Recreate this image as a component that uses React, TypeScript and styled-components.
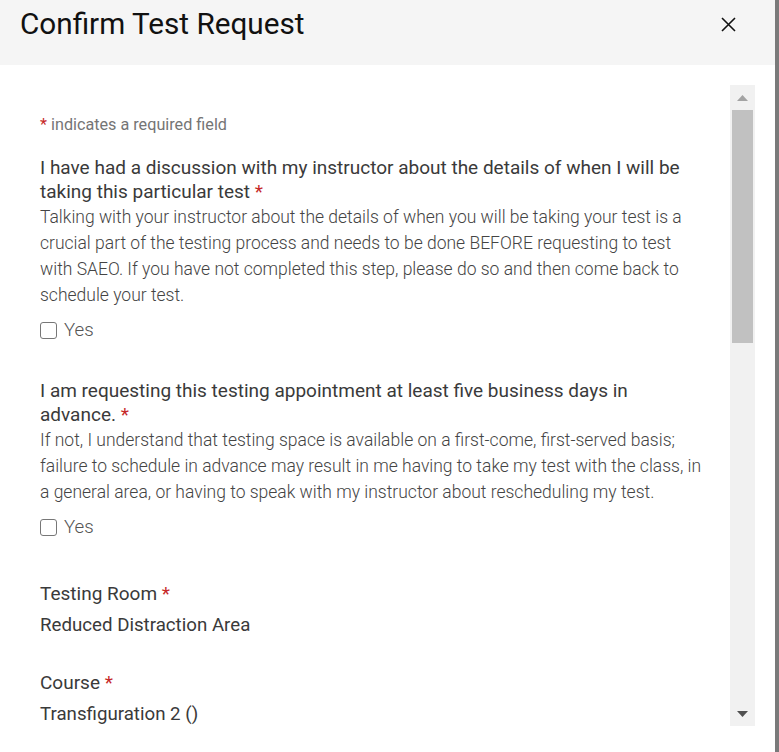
import React from "react"
import styled, { createGlobalStyle } from "styled-components"

const GlobalStyle = createGlobalStyle`
  html, body {
    margin: 0;
    padding: 0;
    background: #ffffff;
    font-family: Roboto, "Liberation Sans", Arial, sans-serif;
  }
`

const Page = styled.div`
  display: flex;
  width: 779px;
  height: 752px;
  overflow: hidden;
`

const Modal = styled.div`
  width: 775px;
  display: flex;
  flex-direction: column;
  background: #ffffff;
`

const Backdrop = styled.div`
  flex: 1;
  background: #7a7a7a;
`

const Header = styled.div`
  height: 65px;
  box-sizing: border-box;
  background: #f5f5f5;
  display: flex;
  justify-content: space-between;
  align-items: flex-start;
  padding: 5px 39px 0 20px;
`

const Title = styled.h2`
  margin: 0;
  font-size: 29.7px;
  line-height: 38px;
  font-weight: 400;
  color: #111;
`

const CloseButton = styled.button`
  border: none;
  background: none;
  padding: 0;
  margin-top: 11px;
  width: 16px;
  height: 16px;
  cursor: pointer;
  display: flex;
  align-items: center;
  justify-content: center;
`

const Body = styled.div`
  flex: 1;
  padding: 20px 20px 26px 20px;
  display: flex;
  min-height: 0;
`

const ScrollArea = styled.div`
  flex: 1;
  display: flex;
  min-height: 0;
`

const Content = styled.div`
  flex: 1;
  overflow: hidden;
  padding: 29px 24px 0 20px;
`

const Scrollbar = styled.div`
  width: 25px;
  background: #f1f1f1;
  display: flex;
  flex-direction: column;
  align-items: center;
`

const ArrowButton = styled.div<{ $down?: boolean }>`
  height: 25px;
  width: 100%;
  display: flex;
  align-items: center;
  justify-content: center;
  color: ${(p) => (p.$down ? "#505050" : "#a3a3a3")};
`

const Track = styled.div`
  flex: 1;
  width: 100%;
  padding: 0 2px;
  box-sizing: border-box;
`

const Thumb = styled.div`
  height: 233px;
  background: #c1c1c1;
`

const Note = styled.div`
  font-size: 16.2px;
  line-height: 22px;
  color: #757575;
  margin-bottom: 20px;
`

const Req = styled.span`
  color: #c62828;
`

const Field = styled.div<{ $gap?: number }>`
  margin-bottom: ${(p) => p.$gap ?? 37}px;
`

const Label = styled.div`
  font-size: 19px;
  line-height: 24px;
  color: #3a3a3a;
`

const Description = styled.div`
  font-size: 17.5px;
  line-height: 26px;
  font-weight: 300;
  color: #444;
`

const CheckRow = styled.label`
  display: flex;
  align-items: center;
  gap: 7px;
  height: 24px;
  margin-top: 10px;
  font-size: 18.7px;
  font-weight: 300;
  color: #555;
`

const Box = styled.input`
  appearance: none;
  margin: 0;
  width: 17px;
  height: 17px;
  border: 1.5px solid #777;
  border-radius: 3px;
  background: #fff;
  box-sizing: border-box;
`

const Value = styled.div`
  font-size: 18.7px;
  line-height: 24px;
  color: #3a3a3a;
  margin-top: 7px;
`

const checks = [
  {
    label: "I have had a discussion with my instructor about the details of when I will be taking this particular test",
    text: "Talking with your instructor about the details of when you will be taking your test is a crucial part of the testing process and needs to be done BEFORE requesting to test with SAEO. If you have not completed this step, please do so and then come back to schedule your test.",
  },
  {
    label: "I am requesting this testing appointment at least five business days in advance.",
    text: "If not, I understand that testing space is available on a first-come, first-served basis; failure to schedule in advance may result in me having to take my test with the class, in a general area, or having to speak with my instructor about rescheduling my test.",
  },
]

export default function App() {
  return (
    <Page>
      <GlobalStyle />
      <Modal>
        <Header>
          <Title>Confirm Test Request</Title>
          <CloseButton aria-label="Close">
            <svg width="15" height="15" viewBox="0 0 15 15">
              <path d="M1 1 L14 14 M14 1 L1 14" stroke="#111" strokeWidth="1.6" />
            </svg>
          </CloseButton>
        </Header>
        <Body>
          <ScrollArea>
            <Content>
              <Note>
                <Req>*</Req> indicates a required field
              </Note>
              {checks.map((c, i) => (
                <Field key={i} $gap={i === 0 ? 37 : 43}>
                  <Label>
                    {c.label} <Req>*</Req>
                  </Label>
                  <Description>{c.text}</Description>
                  <CheckRow>
                    <Box type="checkbox" />
                    Yes
                  </CheckRow>
                </Field>
              ))}
              <Field $gap={34}>
                <Label>
                  Testing Room <Req>*</Req>
                </Label>
                <Value>Reduced Distraction Area</Value>
              </Field>
              <Field>
                <Label>
                  Course <Req>*</Req>
                </Label>
                <Value>Transfiguration 2 ()</Value>
              </Field>
            </Content>
            <Scrollbar>
              <ArrowButton>
                <svg width="11" height="6" viewBox="0 0 11 6">
                  <path d="M0 6 L5.5 0 L11 6 Z" fill="currentColor" />
                </svg>
              </ArrowButton>
              <Track>
                <Thumb />
              </Track>
              <ArrowButton $down>
                <svg width="11" height="6" viewBox="0 0 11 6">
                  <path d="M0 0 L11 0 L5.5 6 Z" fill="currentColor" />
                </svg>
              </ArrowButton>
            </Scrollbar>
          </ScrollArea>
        </Body>
      </Modal>
      <Backdrop />
    </Page>
  )
}
